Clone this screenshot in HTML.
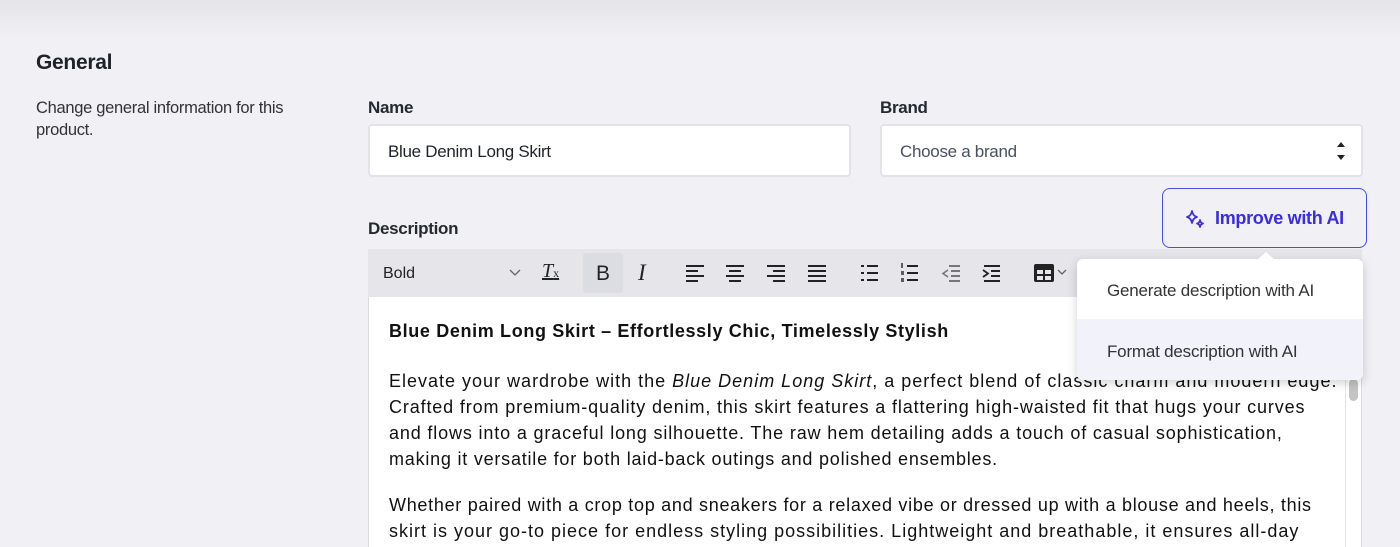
<!DOCTYPE html>
<html><head><style>
*{box-sizing:border-box;margin:0;padding:0}
body{width:1400px;height:539px;overflow:hidden;background:#f0f0f5;font-family:"Liberation Sans",sans-serif;color:#1f2329;position:relative}
.top{position:absolute;left:0;top:0;width:1400px;height:40px;background:linear-gradient(#e4e4e9,#f0f0f5)}
.a{position:absolute}
.lbl{font-size:17px;font-weight:bold;color:#252a30;letter-spacing:-0.3px}
.inp{background:#fff;border:2px solid #e2e3e8;border-radius:4px;font-size:17px;padding-left:18px;line-height:52px;letter-spacing:-0.3px}
.tb{position:absolute;left:368px;top:249px;width:994px;height:48px;background:#e5e5ea}
.ic{position:absolute;top:12px}
.ed{position:absolute;left:368px;top:297px;width:994px;height:250px;background:#fff;border-left:1px solid #ddd;border-right:1px solid #ddd}
.ed p{font-size:18px;line-height:26px;color:#111;white-space:nowrap}
</style></head><body>
<div class="top"></div>
<div class="a" style="left:36px;top:51px;font-size:21px;font-weight:bold;letter-spacing:-0.3px">General</div>
<div class="a" style="left:36px;top:97px;font-size:16.5px;line-height:22px;color:#333;width:300px;letter-spacing:-0.3px">Change general information for this product.</div>
<div class="a lbl" style="left:368px;top:98px">Name</div>
<div class="a inp" style="left:368px;top:124px;width:483px;height:53px">Blue Denim Long Skirt</div>
<div class="a lbl" style="left:880px;top:98px">Brand</div>
<div class="a inp" style="left:880px;top:124px;width:483px;height:53px;color:#4a5060">Choose a brand
<svg style="position:absolute;right:14px;top:14px" width="12" height="22" viewBox="0 0 12 22"><path d="M2 7L6 2 10 7Z M2 15L6 20 10 15Z" fill="#222"/></svg></div>
<div class="a lbl" style="left:368px;top:219px">Description</div>
<div class="a" style="left:1162px;top:188px;width:205px;height:60px;border:1.5px solid #4a4cf0;border-radius:8px;color:#3a2de0;font-size:18px;font-weight:bold;line-height:59px;padding-left:52px;letter-spacing:-0.3px">
<svg style="position:absolute;left:22px;top:20px" width="20" height="20" viewBox="0 0 20 20" fill="none" stroke="#3a2de0" stroke-width="1.8" stroke-linejoin="round"><path d="M7 2Q8 7 12 8Q8 9 7 14Q6 9 2 8Q6 7 7 2Z"/><path d="M15 11Q15.5 14 18 14.5Q15.5 15 15 18Q14.5 15 12 14.5Q14.5 14 15 11Z"/></svg>Improve with AI</div>
<div class="tb">
<div class="a" style="left:15px;top:16px;font-size:16px;color:#222">Bold</div>
<svg class="ic" style="left:140px" width="14" height="24"><path d="M2 9l5 5 5-5" stroke="#666" fill="none" stroke-width="1.3"/></svg>
<div class="a" style="left:174px;top:11px;font-size:20px;font-style:italic;text-decoration:underline;font-family:'Liberation Serif'">T<span style="font-size:12px;font-style:normal;text-decoration:none">x</span></div>
<div class="a" style="left:215px;top:4px;width:40px;height:40px;background:#dcdde2;border-radius:3px;font-size:21px;line-height:42px;text-align:center">B</div>
<div class="a" style="left:270px;top:11px;font-size:23px;font-style:italic;font-family:'Liberation Serif'">I</div>
<svg class="a" style="left:316px;top:14px" width="340" height="22" fill="#222">
<g><rect x="2" y="2" width="18" height="2"/><rect x="2" y="7" width="12" height="2"/><rect x="2" y="12" width="18" height="2"/><rect x="2" y="17" width="12" height="2"/></g>
<g transform="translate(41 0)"><rect x="1" y="2" width="18" height="2"/><rect x="4" y="7" width="12" height="2"/><rect x="1" y="12" width="18" height="2"/><rect x="4" y="17" width="12" height="2"/></g>
<g transform="translate(82 0)"><rect x="1" y="2" width="18" height="2"/><rect x="7" y="7" width="12" height="2"/><rect x="1" y="12" width="18" height="2"/><rect x="7" y="17" width="12" height="2"/></g>
<g transform="translate(123 0)"><rect x="1" y="2" width="18" height="2"/><rect x="1" y="7" width="18" height="2"/><rect x="1" y="12" width="18" height="2"/><rect x="1" y="17" width="18" height="2"/></g>
<g transform="translate(176 0)"><rect x="1" y="2" width="3" height="2"/><rect x="7" y="2" width="11" height="2"/><rect x="1" y="9" width="3" height="2"/><rect x="7" y="9" width="11" height="2"/><rect x="1" y="16" width="3" height="2"/><rect x="7" y="16" width="11" height="2"/></g>
<g transform="translate(216 0)"><rect x="7" y="2" width="11" height="2"/><rect x="7" y="9" width="11" height="2"/><rect x="7" y="16" width="11" height="2"/><rect x="1" y="0" width="2" height="5" opacity=".7"/><rect x="1" y="8" width="3" height="4" opacity=".7"/><rect x="1" y="15" width="3" height="4" opacity=".7"/></g>
<g transform="translate(258 0)" fill="#777"><rect x="7" y="2" width="11" height="2"/><rect x="9" y="7" width="9" height="2"/><rect x="9" y="12" width="9" height="2"/><rect x="7" y="17" width="11" height="2"/><path d="M6 7L1 10.5 6 14" stroke="#777" fill="none" stroke-width="1.6"/></g>
<g transform="translate(298 0)"><rect x="2" y="2" width="16" height="2"/><rect x="9" y="7" width="9" height="2"/><rect x="9" y="12" width="9" height="2"/><rect x="2" y="17" width="16" height="2"/><path d="M1 7L6 10.5 1 14" stroke="#222" fill="none" stroke-width="1.8"/></g>
</svg>
<svg class="a" style="left:665px;top:14px" width="40" height="22"><rect x="1" y="1" width="20" height="18" rx="2" fill="#222"/><rect x="4" y="7" width="6" height="4" fill="#e5e5ea"/><rect x="12" y="7" width="6" height="4" fill="#e5e5ea"/><rect x="4" y="13" width="6" height="4" fill="#e5e5ea"/><rect x="12" y="13" width="6" height="4" fill="#e5e5ea"/><path d="M25 7l4 4 4-4" stroke="#666" fill="none" stroke-width="1.3"/></svg>
</div>
<div class="ed">
<div style="position:absolute;left:20px;top:21px;width:958px">
<p style="font-weight:bold;letter-spacing:0.64px">Blue Denim Long Skirt – Effortlessly Chic, Timelessly Stylish</p>
<p style="margin-top:24px;letter-spacing:1.0px">Elevate your wardrobe with the <i>Blue Denim Long Skirt</i>, a perfect blend of classic charm and modern edge.</p>
<p style="letter-spacing:0.86px">Crafted from premium-quality denim, this skirt features a flattering high-waisted fit that hugs your curves</p>
<p style="letter-spacing:0.85px">and flows into a graceful long silhouette. The raw hem detailing adds a touch of casual sophistication,</p>
<p style="letter-spacing:0.78px">making it versatile for both laid-back outings and polished ensembles.</p>
<p style="margin-top:20px;letter-spacing:0.71px">Whether paired with a crop top and sneakers for a relaxed vibe or dressed up with a blouse and heels, this</p>
<p style="letter-spacing:1.0px">skirt is your go-to piece for endless styling possibilities. Lightweight and breathable, it ensures all-day</p>
</div>
<div class="a" style="left:976px;top:0;width:1px;height:250px;background:#e5e5e5"></div>
<div class="a" style="left:980px;top:82px;width:9px;height:22px;background:#c4c4c4;border-radius:5px"></div>
</div>
<div class="a" style="left:1077px;top:259px;width:286px;height:121px;background:#fff;border-radius:6px;box-shadow:0 3px 10px rgba(0,0,0,.18);overflow:hidden;font-size:17px;color:#333;letter-spacing:-0.2px">
<div style="position:absolute;left:30px;top:22px">Generate description with AI</div>
<div style="position:absolute;left:0;top:60px;width:286px;height:61px;background:#f1f2fa"></div>
<div style="position:absolute;left:30px;top:83px">Format description with AI</div>
</div>
<div class="a" style="left:1257px;top:252px;width:0;height:0;border-left:9px solid transparent;border-right:9px solid transparent;border-bottom:8px solid #fff"></div>
</body></html>
